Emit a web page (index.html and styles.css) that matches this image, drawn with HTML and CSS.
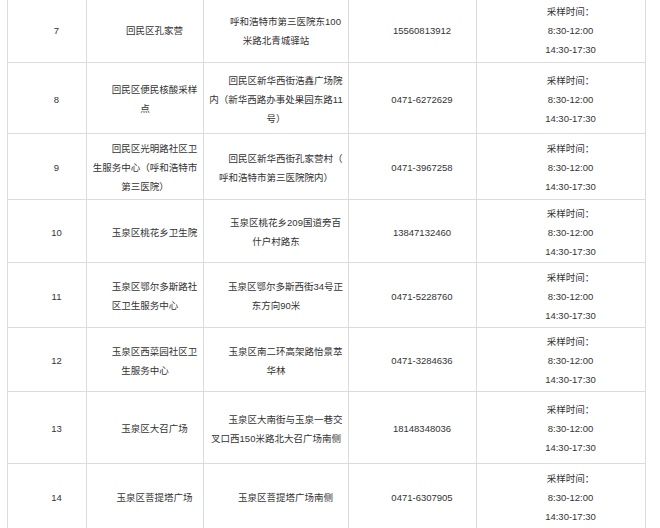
FILE: index.html
```html
<!DOCTYPE html>
<html lang="zh-CN">
<head>
<meta charset="utf-8">
<title>核酸采样点</title>
<link rel="stylesheet" href="styles.css">
</head>
<body>
<div class="page">
<table class="sites">
<colgroup>
<col class="c-no"><col class="c-name"><col class="c-addr"><col class="c-tel"><col class="c-time">
</colgroup>
<tbody>
<tr class="h66">
<td><p>7</p></td>
<td><p>回民区孔家营</p></td>
<td><p>呼和浩特市第三医院东100米路北青城驿站</p></td>
<td><p>15560813912</p></td>
<td><p>采样时间：</p><p>8:30-12:00</p><p>14:30-17:30</p></td>
</tr>
<tr class="h71">
<td><p>8</p></td>
<td><p>回民区便民核酸采样点</p></td>
<td><p>回民区新华西街浩鑫广场院内（新华西路办事处果园东路11号）</p></td>
<td><p>0471-6272629</p></td>
<td><p>采样时间：</p><p>8:30-12:00</p><p>14:30-17:30</p></td>
</tr>
<tr class="h66">
<td><p>9</p></td>
<td><p>回民区光明路社区卫生服务中心（呼和浩特市第三医院）</p></td>
<td><p class="loose">回民区新华西街孔家营村（呼和浩特市第三医院院内）</p></td>
<td><p>0471-3967258</p></td>
<td><p>采样时间：</p><p>8:30-12:00</p><p>14:30-17:30</p></td>
</tr>
<tr class="h63">
<td><p>10</p></td>
<td><p>玉泉区桃花乡卫生院</p></td>
<td><p>玉泉区桃花乡209国道旁百什户村路东</p></td>
<td><p>13847132460</p></td>
<td><p>采样时间：</p><p>8:30-12:00</p><p>14:30-17:30</p></td>
</tr>
<tr class="h65">
<td><p>11</p></td>
<td><p>玉泉区鄂尔多斯路社区卫生服务中心</p></td>
<td><p>玉泉区鄂尔多斯西街34号正东方向90米</p></td>
<td><p>0471-5228760</p></td>
<td><p>采样时间：</p><p>8:30-12:00</p><p>14:30-17:30</p></td>
</tr>
<tr class="h64">
<td><p>12</p></td>
<td><p>玉泉区西菜园社区卫生服务中心</p></td>
<td><p>玉泉区南二环高架路怡景萃华林</p></td>
<td><p>0471-3284636</p></td>
<td><p>采样时间：</p><p>8:30-12:00</p><p>14:30-17:30</p></td>
</tr>
<tr class="h72">
<td><p>13</p></td>
<td><p>玉泉区大召广场</p></td>
<td><p>玉泉区大南街与玉泉一巷交叉口西150米路北大召广场南侧</p></td>
<td><p>18148348036</p></td>
<td><p>采样时间：</p><p>8:30-12:00</p><p>14:30-17:30</p></td>
</tr>
<tr class="h66">
<td><p>14</p></td>
<td><p>玉泉区菩提塔广场</p></td>
<td><p>玉泉区菩提塔广场南侧</p></td>
<td><p>0471-6307905</p></td>
<td><p>采样时间：</p><p>8:30-12:00</p><p>14:30-17:30</p></td>
</tr>
</tbody>
</table>
</div>
</body>
</html>
```
FILE: styles.css
```css
html, body {
  margin: 0;
  padding: 0;
  background: #fff;
}
.page {
  padding-left: 7px;
  margin-top: -4px;
}
.sites {
  border-collapse: collapse;
  table-layout: fixed;
  width: 638px;
  font-family: "Liberation Sans", "Noto Sans CJK SC", sans-serif;
  font-size: 9.5px;
  color: #333;
}
.c-no { width: 79px; }
.c-name { width: 117px; }
.c-addr { width: 145px; }
.c-tel { width: 128px; }
.c-time { width: 169px; }
.sites td {
  border: 1px solid #dcdcdc;
  padding: 2px 4px 0;
  vertical-align: middle;
  text-align: center;
}
.sites p {
  margin: 0;
  line-height: 19px;
  text-indent: 2em;
}
.sites .loose {
  line-break: anywhere;
}
.h63 td { height: 60px; }
.h64 td { height: 61px; }
.h65 td { height: 62px; }
.h66 td { height: 63px; }
.h71 td { height: 68px; }
.h72 td { height: 69px; }
```
